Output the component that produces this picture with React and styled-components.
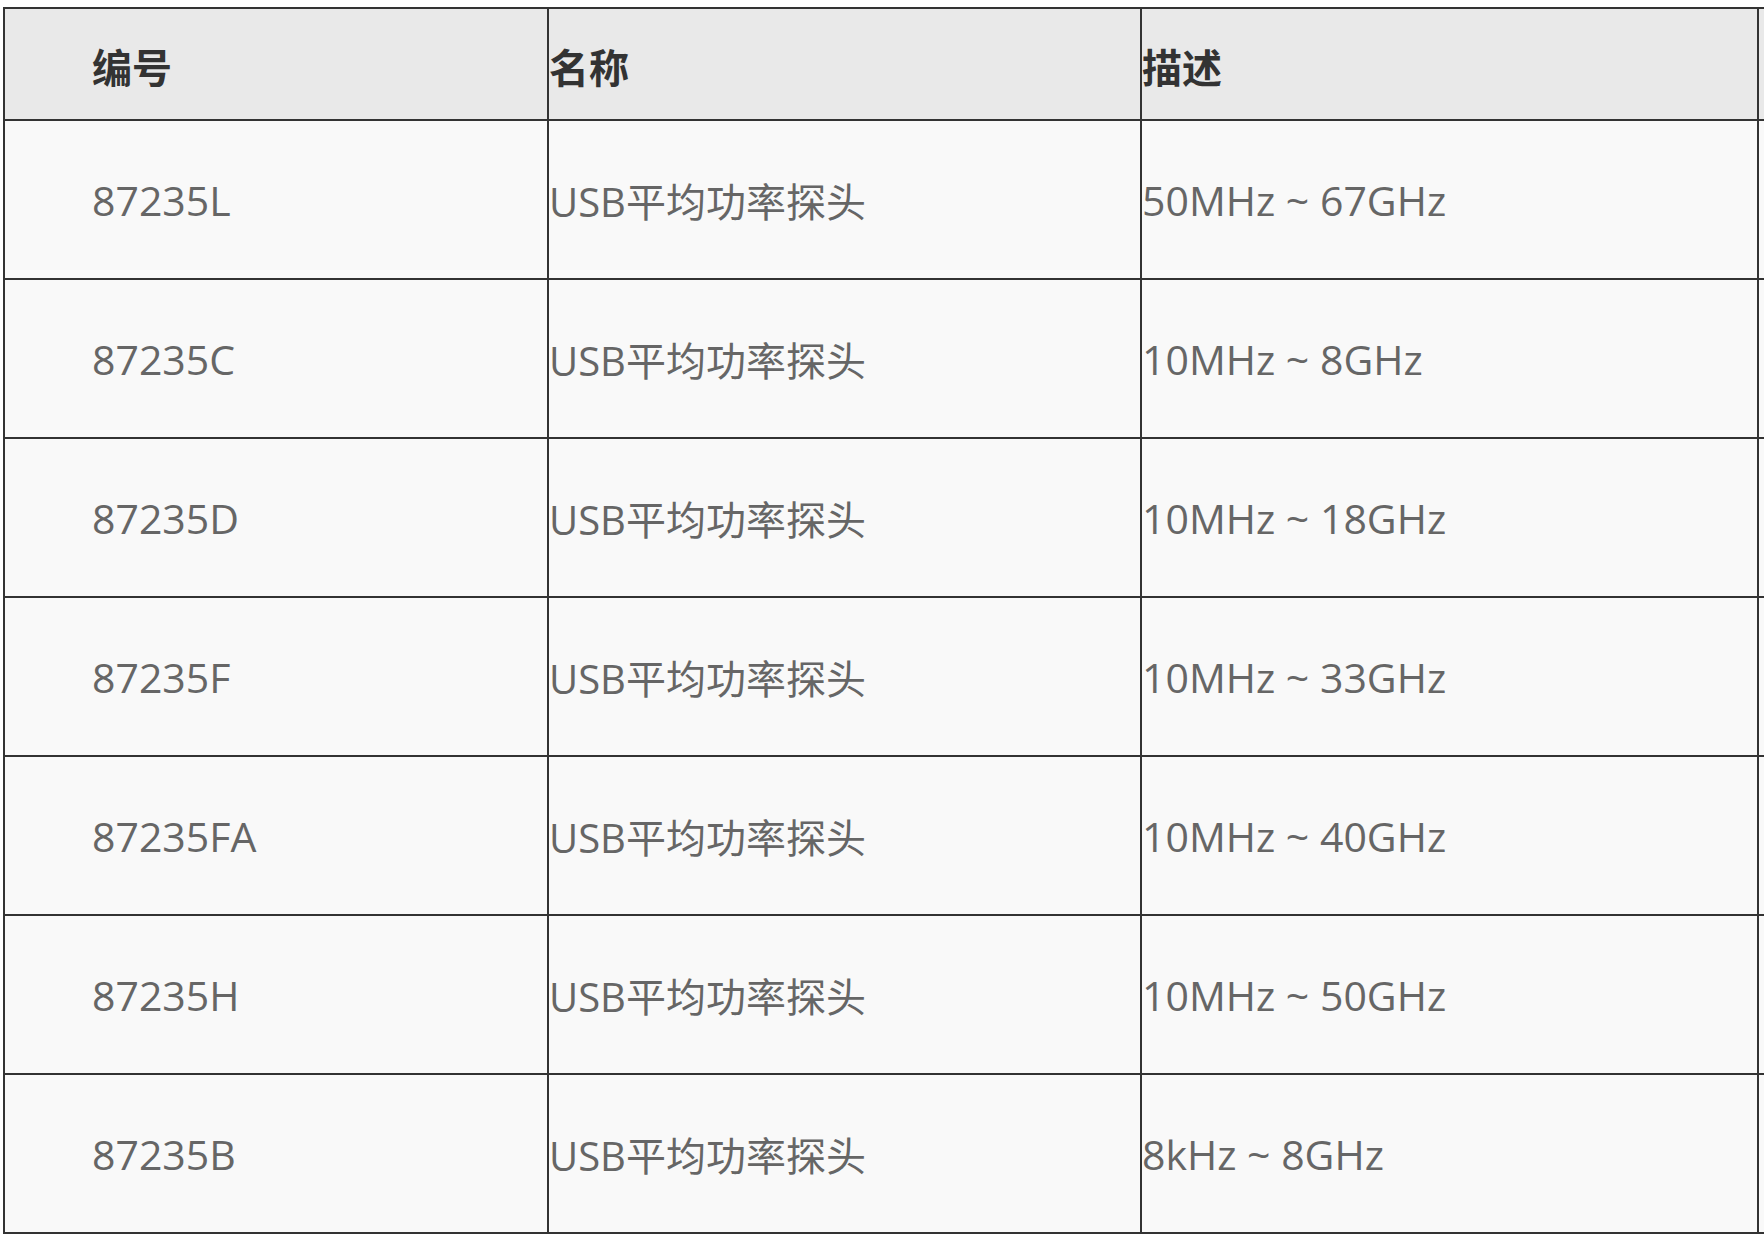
import React from 'react';
import styled, { createGlobalStyle } from 'styled-components';

const GlobalStyle = createGlobalStyle`
  html, body {
    margin: 0;
    padding: 0;
    background: #ffffff;
    overflow: hidden;
  }
`;

const products = [
  { code: '87235L', name: 'USB平均功率探头', range: '50MHz ~ 67GHz' },
  { code: '87235C', name: 'USB平均功率探头', range: '10MHz ~ 8GHz' },
  { code: '87235D', name: 'USB平均功率探头', range: '10MHz ~ 18GHz' },
  { code: '87235F', name: 'USB平均功率探头', range: '10MHz ~ 33GHz' },
  { code: '87235FA', name: 'USB平均功率探头', range: '10MHz ~ 40GHz' },
  { code: '87235H', name: 'USB平均功率探头', range: '10MHz ~ 50GHz' },
  { code: '87235B', name: 'USB平均功率探头', range: '8kHz ~ 8GHz' },
];

function App() {
  return (
    <>
      <GlobalStyle />
      <Page>
        <Table>
          <colgroup>
            <col style={{ width: 544 }} />
            <col style={{ width: 593 }} />
            <col style={{ width: 617 }} />
            <col style={{ width: 400 }} />
          </colgroup>
          <thead>
            <HeadRow>
              <HeadCell $indent>编号</HeadCell>
              <HeadCell>名称</HeadCell>
              <HeadCell>描述</HeadCell>
              <HeadCell />
            </HeadRow>
          </thead>
          <tbody>
            {products.map((p) => (
              <BodyRow key={p.code}>
                <Cell $indent $size={41}>{p.code}</Cell>
                <Cell>{p.name}</Cell>
                <Cell $size={41}>{p.range}</Cell>
                <Cell />
              </BodyRow>
            ))}
          </tbody>
        </Table>
      </Page>
    </>
  );
}

export default App;

const Page = styled.div`
  padding: 7px 0 0 3px;
  width: 1764px;
  height: 1240px;
  box-sizing: border-box;
  overflow: hidden;
`;

const Table = styled.table`
  table-layout: fixed;
  width: 2154px;
  border-collapse: collapse;
  border: 2px solid #333333;
  font-family: "Open Sans", "Noto Sans CJK SC", sans-serif;
`;

const HeadRow = styled.tr`
  height: 112px;
  background: #e9e9e9;
`;

const BodyRow = styled.tr`
  height: 159px;
  background: #f9f9f9;
`;

const HeadCell = styled.th`
  border: 2px solid #333333;
  padding: 4px 0 0 ${(p) => (p.$indent ? '87px' : '0')};
  text-align: left;
  vertical-align: middle;
  font-family: "Noto Sans CJK SC", sans-serif;
  font-size: 40px;
  font-weight: 700;
  color: #333333;
`;

const Cell = styled.td`
  border: 2px solid #333333;
  padding: 0 0 0 ${(p) => (p.$indent ? '87px' : '0')};
  vertical-align: middle;
  font-size: ${(p) => p.$size || 40}px;
  color: #666666;
  white-space: nowrap;
`;
